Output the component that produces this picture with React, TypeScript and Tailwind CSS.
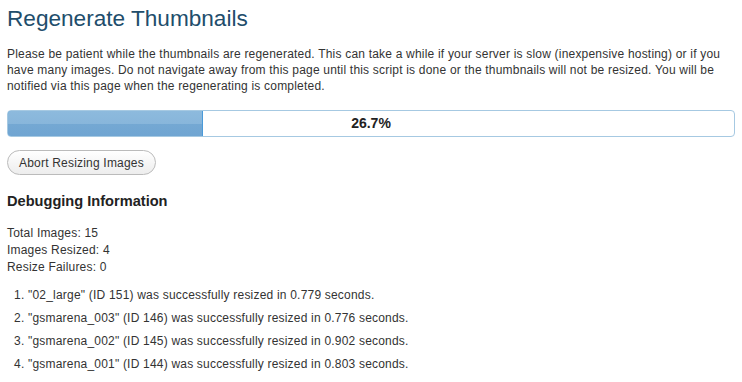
import React from "react";

export default function App() {
  const items = [
    ['"02_large" (ID 151) was successfully resized in 0.779 seconds.'],
    ['"gsmarena_003" (ID 146) was successfully resized in 0.776 seconds.'],
    ['"gsmarena_002" (ID 145) was successfully resized in 0.902 seconds.'],
    ['"gsmarena_001" (ID 144) was successfully resized in 0.803 seconds.'],
  ];
  return (
    <div
      className="w-[742px] h-[382px] bg-white overflow-hidden px-[7px] text-[#333333]"
      style={{ fontFamily: '"Liberation Sans", Arial, sans-serif' }}
    >
      <h2 className="pt-[4px] text-[22.6px] leading-[29px] text-[#214d6b] whitespace-nowrap">
        Regenerate Thumbnails
      </h2>
      <p className="mt-[13px] text-[12px] leading-[16px] tracking-[0.2px] whitespace-nowrap">
        Please be patient while the thumbnails are regenerated. This can take a while if your server is slow (inexpensive hosting) or if you
        <br />
        have many images. Do not navigate away from this page until this script is done or the thumbnails will not be resized. You will be
        <br />
        notified via this page when the regenerating is completed.
      </p>
      <div className="relative mt-[16px] h-[27px] w-[728px] rounded-[4px] border border-[#a6c9e2] bg-white overflow-hidden">
        <div className="absolute left-[-1px] top-[-1px] bottom-[-1px] w-[196px] rounded-l-[4px] border border-[#4a9ad9] bg-[linear-gradient(to_bottom,#8dbadd_0%,#88b6db_50%,#74a8d3_52%,#70a5d2_100%)]" />
        <div className="absolute inset-0 flex items-center justify-center text-[14px] font-bold text-[#222222]">
          26.7%
        </div>
      </div>
      <button className="mt-[13px] h-[25px] rounded-full border border-[#bbbbbb] bg-[linear-gradient(to_bottom,#ffffff,#ededed)] px-[11px] text-[12px] leading-[22px] tracking-[0.2px] text-[#333333]">
        Abort Resizing Images
      </button>
      <h3 className="mt-[16px] text-[14.6px] leading-[20px] font-bold text-[#222222]">
        Debugging Information
      </h3>
      <div className="mt-[14px] text-[12px] leading-[16.8px] tracking-[0.2px]">
        <div>Total Images: 15</div>
        <div>Images Resized: 4</div>
        <div>Resize Failures: 0</div>
      </div>
      <ol className="mt-[12px] list-decimal pl-[21px] text-[12px] leading-[17px] tracking-[0.2px]">
        {items.map((t, i) => (
          <li key={i} className="mb-[6px] whitespace-nowrap">
            {t[0]}
          </li>
        ))}
      </ol>
    </div>
  );
}
